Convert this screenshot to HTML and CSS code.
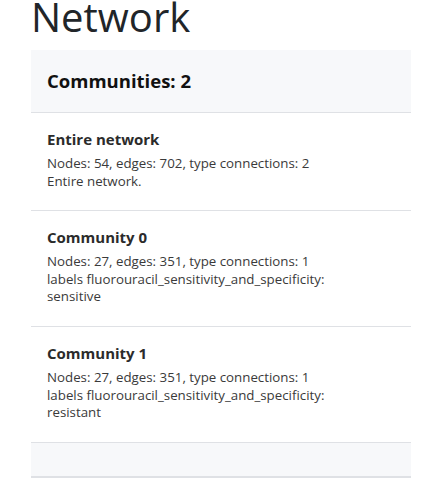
FILE: index.html
```html
<!DOCTYPE html>
<html>
<head>
<meta charset="utf-8">
<link rel="stylesheet" href="styles.css">
</head>
<body>
<div class="page">
  <h1 class="title">Network</h1>
  <div class="card">
    <div class="card-header">
      <h2 class="card-title">Communities: 2</h2>
    </div>
    <ul class="list">
      <li class="item">
        <h3 class="item-title">Entire network</h3>
        <p class="item-text">Nodes: 54, edges: 702, type connections: 2<br>Entire network.</p>
      </li>
      <li class="item">
        <h3 class="item-title">Community 0</h3>
        <p class="item-text">Nodes: 27, edges: 351, type connections: 1<br>labels fluorouracil_sensitivity_and_specificity: sensitive</p>
      </li>
      <li class="item">
        <h3 class="item-title">Community 1</h3>
        <p class="item-text">Nodes: 27, edges: 351, type connections: 1<br>labels fluorouracil_sensitivity_and_specificity: resistant</p>
      </li>
    </ul>
    <div class="card-footer"></div>
  </div>
</div>
</body>
</html>
```

FILE: styles.css
```css
html, body {
  margin: 0;
  padding: 0;
  background: #ffffff;
}
body {
  font-family: "Open Sans", "Noto Sans", sans-serif;
  color: #212529;
}
.page {
  padding: 0 29px 0 31px;
}
.title {
  font-family: "Open Sans", sans-serif;
  font-weight: 400;
  font-size: 40px;
  line-height: 48px;
  margin: -7px 0 9px 0;
  color: #212529;
}
.card {
  background: #fff;
}
.card-header {
  background: #f7f8fa;
  border-bottom: 1px solid #dfe1e5;
  padding: 20px 16px;
}
.card-title {
  margin: 0;
  font-size: 18.5px;
  line-height: 22px;
  font-weight: 700;
  color: #111;
}
.list {
  list-style: none;
  margin: 0;
  padding: 0;
}
.item {
  padding: 16px 16px 20px;
  border-bottom: 1px solid #dfe1e5;
}
.item-title {
  margin: 0 0 6px 0;
  font-size: 15px;
  line-height: 20px;
  font-weight: 700;
  color: #2b2b2b;
}
.item-text {
  margin: 0;
  max-width: 290px;
  font-size: 13.3px;
  line-height: 17.6px;
  color: #3a3a3a;
}
.card-footer {
  background: #f7f8fa;
  height: 33px;
  border-bottom: 2px solid #dfe1e5;
}
```
